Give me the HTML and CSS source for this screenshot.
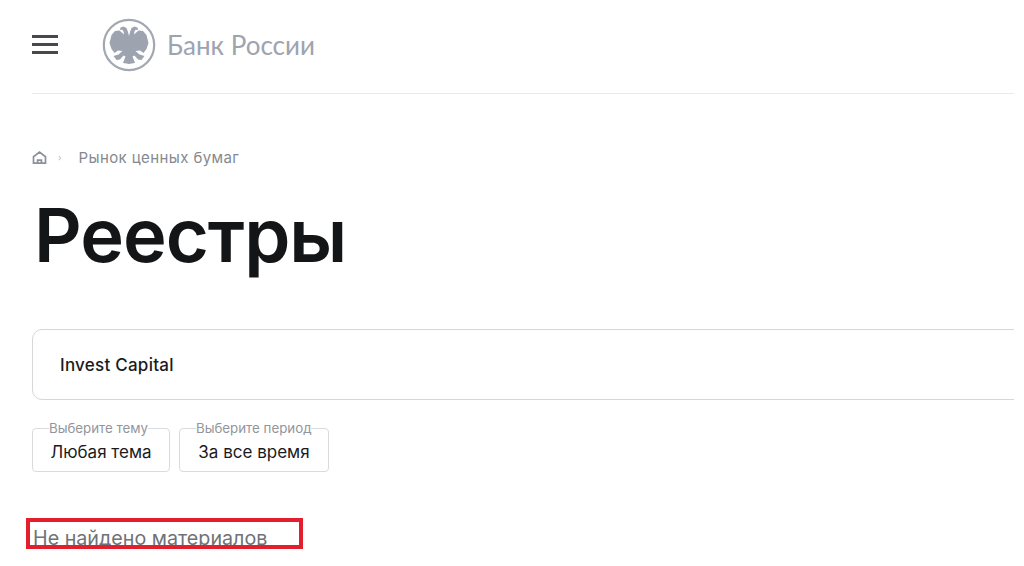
FILE: index.html
```html
<!DOCTYPE html>
<html lang="ru">
<head>
<meta charset="utf-8">
<title>Реестры</title>
<link rel="stylesheet" href="styles.css">
</head>
<body>
<div class="page">
  <header class="header">
    <div class="burger"><span></span><span></span><span></span></div>
    <svg class="emblem" viewBox="0 0 54 54" aria-hidden="true">
      <circle cx="27" cy="27" r="25.200" fill="none" stroke="#a2a8b2" stroke-width="2.200"/>
      <g fill="#9ea4af">
        <path d="M27.500 20 26 14 24.500 10 21.500 8.500 18.500 9.500 18 12 20.500 11.800 21.500 13.500 22 16.500 17.500 12.500 13 13 9.500 17 7.500 25 9.500 31 12.500 35 16 32.500 20.500 33 16.500 36.500 11.500 38 14.500 42 18 41.500 21.500 37.500 23.500 38.500 21 45 27.500 46z"/>
        <path d="M27.500 20 26 14 24.500 10 21.500 8.500 18.500 9.500 18 12 20.500 11.800 21.500 13.500 22 16.500 17.500 12.500 13 13 9.500 17 7.500 25 9.500 31 12.500 35 16 32.500 20.500 33 16.500 36.500 11.500 38 14.500 42 18 41.500 21.500 37.500 23.500 38.500 21 45 27.500 46z" transform="matrix(-1 0 0 1 54 0)"/>
      </g>
    </svg>
    <span class="brand">Банк России</span>
  </header>
  <nav class="crumbs">
    <svg class="home" viewBox="0 0 14 14" aria-hidden="true"><path d="M1.400 6.300 7 2l5.600 4.300V12.300H1.400z M5.200 12.300V9.500h3.600v2.800" fill="none" stroke="#8d9197" stroke-width="1.600"/></svg>
    <span class="sep">›</span>
    <span class="crumb">Рынок ценных бумаг</span>
  </nav>
  <h1 class="title">Реестры</h1>
  <div class="search">Invest Capital</div>
  <div class="filters">
    <fieldset class="filter filter-topic"><legend>Выберите тему</legend>Любая тема</fieldset>
    <fieldset class="filter filter-period"><legend>Выберите период</legend>За все время</fieldset>
  </div>
  <div class="empty">Не найдено материалов</div>
</div>
</body>
</html>
```
FILE: styles.css
```css
* { box-sizing: border-box; }
html, body { margin: 0; height: 100%; background: #fff; }
body { overflow: hidden; font-family: Inter, "Noto Sans", sans-serif; color: #1a1b1d; }
.page { width: 1014px; height: 566px; padding-left: 32px; overflow: hidden; }
.header { display: flex; align-items: center; height: 94px; border-bottom: 1px solid #e9eaec; }
.burger { display: flex; flex-direction: column; gap: 5px; width: 26px; margin-top: -5px; }
.burger span { display: block; height: 3px; background: #46484b; }
.emblem { width: 54px; height: 54px; margin: -4px 0 0 44px; }
.brand { margin: -4px 0 0 11px; font: 26px/1 Lato, sans-serif; color: #9ea4af; }
.crumbs { display: flex; align-items: center; height: 20px; margin-top: 53px; }
.home { width: 15px; height: 15px; }
.sep { margin-left: 11px; font-size: 9px; color: #b4b8bd; }
.crumb { margin-left: 17px; font-size: 15px; letter-spacing: .4px; color: #85898f; }
.title { margin: 28px 0 0 2px; font-size: 74px; line-height: 80px; font-weight: 600; letter-spacing: -1px; color: #141517; }
.search { display: flex; align-items: center; height: 71px; margin: 54px -20px 0 0; padding-left: 27px; border: 1px solid #d5d7da; border-radius: 10px; font-size: 17px; font-weight: 500; letter-spacing: .25px; }
.filters { display: flex; gap: 9px; margin-top: 20px; }
.filter { margin: 0; padding: 4px 0 0; height: 52px; border: 1px solid #d9dbde; border-radius: 4px; font-size: 17px; line-height: 24px; min-inline-size: 0; text-align: center; }
.filter-topic { width: 138px; }
.filter-period { width: 150px; }
.filter legend { margin-left: 16px; padding: 0; font-size: 13.300px; line-height: 16px; color: #92969c; text-align: left; }
.empty { width: 277px; height: 31px; margin: 46px 0 0 -6px; padding: 5px 0 0 3px; border: 4px solid #e31e2d; font-size: 19.700px; line-height: 22px; color: #6f7276; overflow: hidden; white-space: nowrap; }
```
